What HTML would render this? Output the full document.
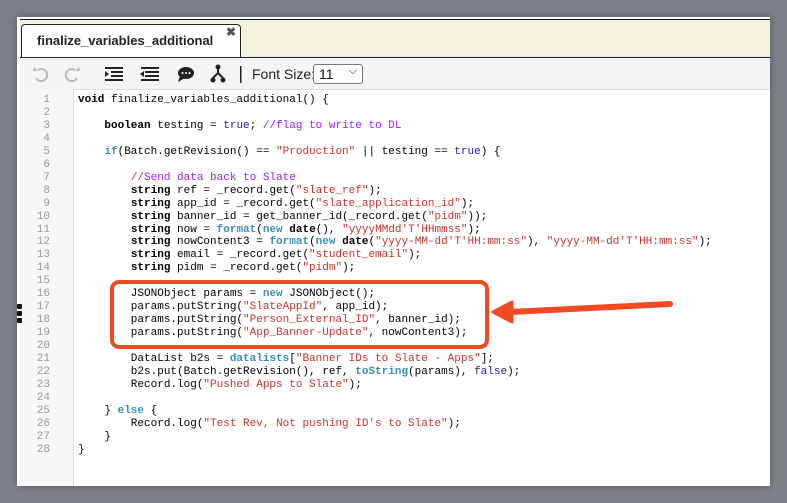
<!DOCTYPE html>
<html><head><meta charset="utf-8"><style>
body{margin:0;width:787px;height:503px;background:#7d828a;overflow:hidden;position:relative;font-family:"Liberation Sans",sans-serif}
.win{position:absolute;left:17px;top:17px;width:753px;height:469px;background:#fff;box-shadow:0 0 8px rgba(0,0,0,.35)}
.tabbar{position:absolute;left:3px;top:2px;width:750px;height:37px;background:#f5f1df;border-top:1px solid #1a1a22;border-bottom:1px solid #1a1a22}
.tab{position:absolute;left:1px;top:4px;width:218px;height:32px;background:#fff;border:1px solid #222;border-bottom:none;border-radius:4px 4px 0 0}
.tab span{position:absolute;left:15px;top:8px;font-size:13px;font-weight:bold;color:#222}
.tab b{position:absolute;right:4px;top:0px;font-size:12px;color:#555}
.tb{position:absolute;left:3px;top:42px;width:750px;height:29px;background:#f5f5f5;border-bottom:1px solid #ddd;border-top:1px solid #e5e5e5}
.code{position:absolute;left:3px;top:72px;width:750px;height:397px}
.gut{position:absolute;left:0;top:0;width:53px;height:397px;background:#f7f7f7;border-right:1px solid #ddd}
pre{margin:0;font-family:"Liberation Mono",monospace;font-size:11px;line-height:12.96px}
.ln{position:absolute;left:0;top:5px;width:30px;text-align:right;color:#999}
.src{position:absolute;left:58px;top:5px;color:#000}
.k{font-weight:bold}.s{color:#c2352d}.c{color:#a020f0}.a{color:#2222a0}.b{color:#3a8fb7;font-weight:bold}
</style></head><body>
<div class="win">
<div class="tabbar"><div class="tab"><span>finalize_variables_additional</span><b>✖</b></div></div>
<div class="tb">
<svg width="750" height="29" style="position:absolute;left:0;top:0">
<g fill="none" stroke="#bbb" stroke-width="2"><path d="M18 10 A6 6 0 1 1 16 18"/><path d="M55 10 A6 6 0 1 0 57 18"/></g>
<path d="M14 7 L18 11 L13 11Z" fill="#bbb"/><path d="M59 7 L55 11 L60 11Z" fill="#bbb"/>
<g fill="#222"><rect x="85" y="7" width="18" height="2"/><rect x="91" y="11" width="12" height="2"/><rect x="91" y="15" width="12" height="2"/><rect x="85" y="19" width="18" height="2"/><path d="M85 11 L89 14 L85 17Z"/>
<rect x="121" y="7" width="18" height="2"/><rect x="125" y="11" width="14" height="2"/><rect x="125" y="15" width="14" height="2"/><rect x="121" y="19" width="18" height="2"/><path d="M124 11 L120 14 L124 17Z"/>
<ellipse cx="166" cy="13" rx="8" ry="6"/><path d="M160 16 L158 22 L165 18Z"/>
<circle cx="198" cy="7" r="2.5"/><circle cx="193" cy="20" r="2.5"/><circle cx="203" cy="20" r="2.5"/></g>
<circle cx="162.5" cy="13" r="1" fill="#fff"/><circle cx="166" cy="13" r="1" fill="#fff"/><circle cx="169.5" cy="13" r="1" fill="#fff"/>
<path d="M198 8 L198 13 L193 18 M198 13 L203 18" stroke="#222" stroke-width="2" fill="none"/>
<rect x="220" y="6" width="1.5" height="17" fill="#222"/>
</svg>
<span style="position:absolute;left:232px;top:6px;font-size:14px;color:#222">Font Size:</span>
<div style="position:absolute;left:293px;top:4px;width:48px;height:18px;border:1px solid #777;border-radius:3px;background:#fff;font-size:14px;color:#111"><span style="position:absolute;left:5px;top:1px">11</span><span style="position:absolute;right:5px;top:0px;font-size:11px">&#x2335;</span></div>
</div>
<div class="code"><div class="gut"></div>
<pre class="ln">1
2
3
4
5
6
7
8
9
10
11
12
13
14
15
16
17
18
19
20
21
22
23
24
25
26
27
28</pre>
<pre class="src"><span class="k">void</span> finalize_variables_additional() {

    <span class="k">boolean</span> testing = <span class="a">true</span>; <span class="c">//flag to write to DL</span>

    <span class="b">if</span>(Batch.getRevision() == <span class="s">"Production"</span> || testing == <span class="a">true</span>) {

        <span class="c">//Send data back to Slate</span>
        <span class="k">string</span> ref = _record.get(<span class="s">"slate_ref"</span>);
        <span class="k">string</span> app_id = _record.get(<span class="s">"slate_application_id"</span>);
        <span class="k">string</span> banner_id = get_banner_id(_record.get(<span class="s">"pidm"</span>));
        <span class="k">string</span> now = <span class="b">format</span>(<span class="b">new</span> <span class="k">date</span>(), <span class="s">"yyyyMMdd'T'HHmmss"</span>);
        <span class="k">string</span> nowContent3 = <span class="b">format</span>(<span class="b">new</span> <span class="k">date</span>(<span class="s">"yyyy-MM-dd'T'HH:mm:ss"</span>), <span class="s">"yyyy-MM-dd'T'HH:mm:ss"</span>);
        <span class="k">string</span> email = _record.get(<span class="s">"student_email"</span>);
        <span class="k">string</span> pidm = _record.get(<span class="s">"pidm"</span>);

        JSONObject params = <span class="b">new</span> JSONObject();
        params.putString(<span class="s">"SlateAppId"</span>, app_id);
        params.putString(<span class="s">"Person_External_ID"</span>, banner_id);
        params.putString(<span class="s">"App_Banner-Update"</span>, nowContent3);

        DataList b2s = <span class="b">datalists</span>[<span class="s">"Banner IDs to Slate - Apps"</span>];
        b2s.put(Batch.getRevision(), ref, <span class="b">toString</span>(params), <span class="a">false</span>);
        Record.log(<span class="s">"Pushed Apps to Slate"</span>);

    } <span class="b">else</span> {
        Record.log(<span class="s">"Test Rev, Not pushing ID's to Slate"</span>);
    }
}</pre>
</div>
</div>
<svg width="787" height="503" style="position:absolute;left:0;top:0">
<rect x="112" y="282" width="375" height="65" rx="7" fill="none" stroke="#f04a23" stroke-width="4"/>
<path d="M670 304 L510 312" stroke="#f04a23" stroke-width="6" stroke-linecap="round"/>
<path d="M493 312 L512 302 L512 322Z" fill="#f04a23" stroke="#f04a23" stroke-width="3" stroke-linejoin="round"/>
<g fill="#111"><rect x="17" y="304" width="5" height="5" rx="1"/><rect x="17" y="311" width="5" height="5" rx="1"/><rect x="17" y="318" width="5" height="5" rx="1"/></g>
</svg>
</body></html>
